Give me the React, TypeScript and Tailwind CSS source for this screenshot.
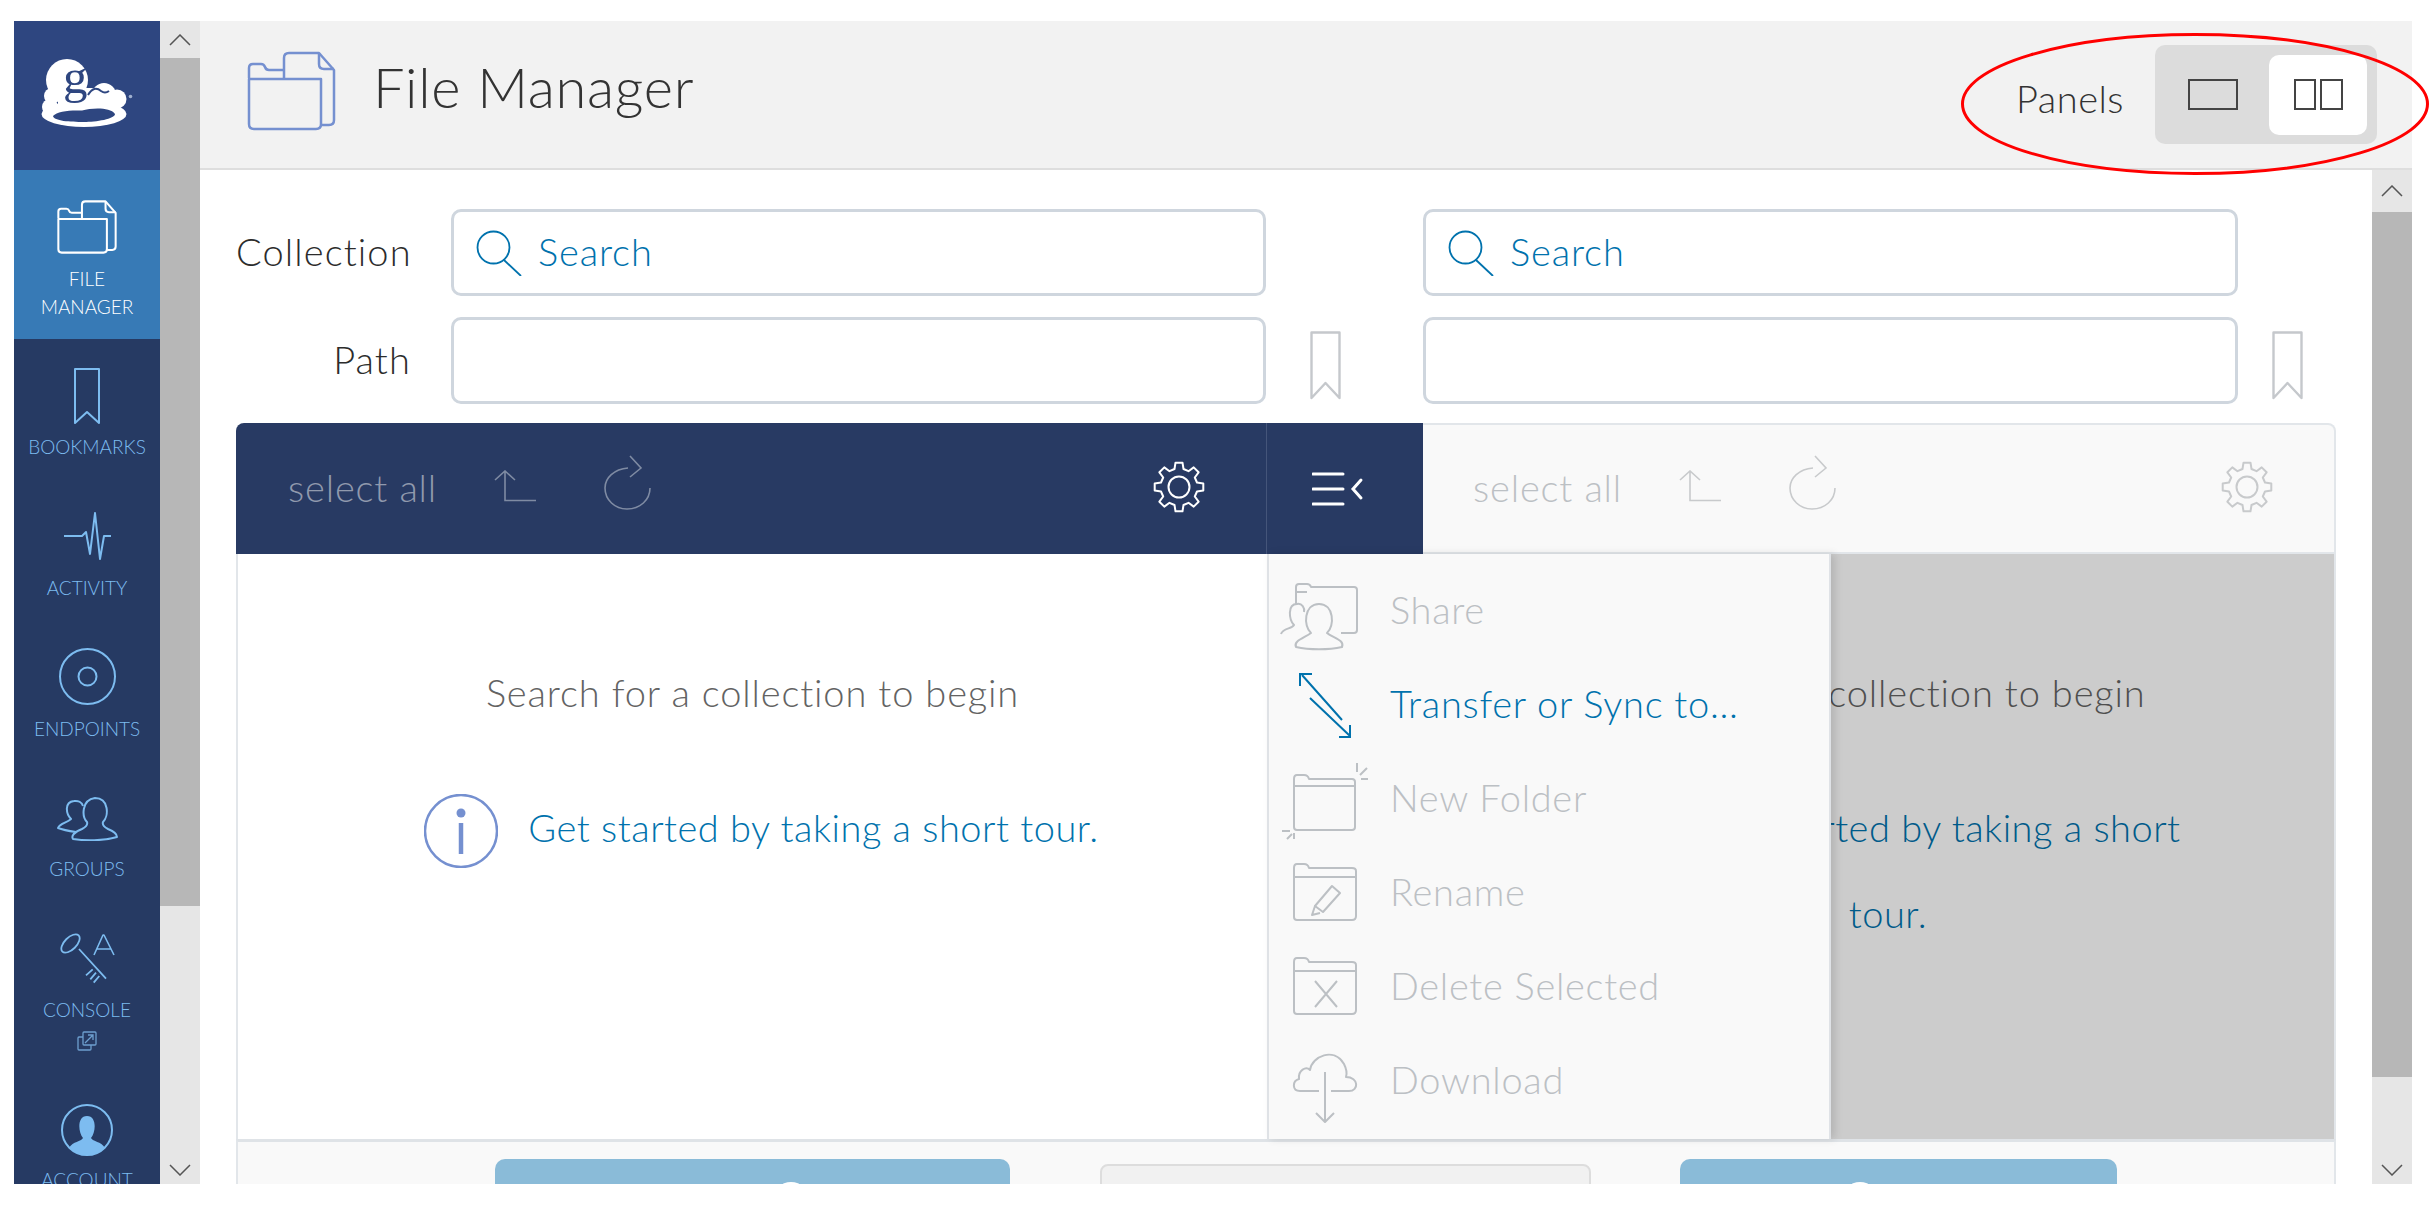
import React from "react";

const gearPath = (() => {
  const cx = 26, cy = 26, teeth = 8, ro = 24.5, ri = 18.5;
  const pts: string[] = [];
  for (let i = 0; i < teeth; i++) {
    const a = (i / teeth) * Math.PI * 2 - Math.PI / 2;
    const w = Math.PI / teeth;
    const p = (r: number, t: number) => `${(cx + Math.cos(t) * r).toFixed(1)} ${(cy + Math.sin(t) * r).toFixed(1)}`;
    pts.push(`${i === 0 ? "M" : "L"}${p(ri, a - w * 0.62)}`);
    pts.push(`L${p(ro, a - w * 0.36)}`);
    pts.push(`L${p(ro, a + w * 0.36)}`);
    pts.push(`L${p(ri, a + w * 0.62)}`);
  }
  return pts.join(" ") + " Z";
})();

function Gear({ color }: { color: string }) {
  return (
    <svg width="52" height="52" viewBox="0 0 52 52" fill="none" stroke={color} strokeWidth="2" strokeLinejoin="round">
      <path d={gearPath} />
      <circle cx="26" cy="26" r="10.5" />
    </svg>
  );
}

function UpIcon({ color }: { color: string }) {
  return (
    <svg width="42" height="32" viewBox="0 0 42 32" fill="none" stroke={color} strokeWidth="1.6">
      <path d="M1 10 L11 1 L21 10 M11 1 V30.5 H42" />
    </svg>
  );
}

function RefreshIcon({ color }: { color: string }) {
  return (
    <svg width="48" height="55" viewBox="0 0 48 55" fill="none" stroke={color} strokeWidth="1.6">
      <path d="M24 13 C 10 14 1 23 1 33 C 1 45 11 54 23 54 C 36 54 46 45 46 33" />
      <path d="M26 1 L37 13 L26 22" />
    </svg>
  );
}

function FilesIcon({ color, sw = 2.5 }: { color: string; sw?: number }) {
  return (
    <svg width="100%" height="100%" viewBox="0 0 89 80" fill="none" stroke={color} strokeWidth={sw} strokeLinejoin="round">
      <path d="M2 27 V17 Q2 13 6 13 H14 Q17 13 18 16 Q19 19 22 19 H36" />
      <path d="M2 28 H74 V73 Q74 78 69 78 H7 Q2 78 2 73 Z" />
      <path d="M37 28 V7 Q37 2 42 2 H72 L87 19 V69 Q87 74 82 74 H74" />
      <path d="M72 2 V13 Q72 18 77 18 H87" />
    </svg>
  );
}

function BookmarkIcon({ color, w, h, sw }: { color: string; w: number; h: number; sw: number }) {
  return (
    <svg width={w} height={h} viewBox="0 0 31 69" fill="none" stroke={color} strokeWidth={sw} strokeLinejoin="round">
      <path d="M1.5 1.5 H29.5 V67 L15.5 52 L1.5 67 Z" />
    </svg>
  );
}

function SearchIcon() {
  return (
    <svg width="46" height="46" viewBox="0 0 46 46" fill="none" stroke="#0072ad" strokeWidth="1.8">
      <circle cx="17.5" cy="17.5" r="16" />
      <path d="M28 30 L45 46" />
    </svg>
  );
}

function InfoIcon() {
  return (
    <svg width="74" height="74" viewBox="0 0 74 74" fill="none" className="inline-block align-middle mr-[30px] -mt-[4px]">
      <circle cx="37" cy="37" r="36" stroke="#7590d0" strokeWidth="2.5" />
      <circle cx="37" cy="19" r="4.5" fill="#7590d0" />
      <path d="M37 29 V60" stroke="#7590d0" strokeWidth="4.5" />
    </svg>
  );
}

function GlobusLogo() {
  return (
    <svg width="115" height="85" viewBox="0 0 115 85">
      <g fill="#fff">
        <circle cx="37" cy="30" r="21" />
        <circle cx="22" cy="46" r="8" />
        <circle cx="20" cy="57" r="8" />
        <circle cx="74" cy="45" r="12" />
        <circle cx="87" cy="49" r="9.500" />
        <ellipse cx="54" cy="64" rx="42.500" ry="13" />
        <rect x="28" y="38" width="55" height="20" />
      </g>
      <path d="M23 66 C27 61 40 60 52 60.500 C62 58 80 57 85 64 C85 69 66 72 54 72 C40 72 24 71 23 66 Z" fill="#2e4680" />
      <path d="M58 45 Q64 35 71 41 Q75 44 79 41" fill="none" stroke="#2e4680" strokeWidth="2" />
      <text x="33" y="43" fontFamily="'Liberation Serif', serif" fontWeight="400" fontSize="49" letterSpacing="0" fill="#2e4680">g</text>
      <circle cx="100.500" cy="46.500" r="1.800" fill="#9fb0cf" />
    </svg>
  );
}

const navColor = "#7dbcf0";

const navItems = [
  {
    label: "BOOKMARKS",
    cls: "h-[141px] pt-[29px]",
    gap: "mt-[11px]",
    icon: (
      <svg width="26" height="56" viewBox="0 0 26 56" fill="none" stroke={navColor} strokeWidth="2" strokeLinejoin="round">
        <path d="M1 1 H25 V55 L13 44 L1 55 Z" />
      </svg>
    ),
  },
  {
    label: "ACTIVITY",
    cls: "h-[141px] pt-[32px]",
    gap: "mt-[16px]",
    icon: (
      <svg width="47" height="48" viewBox="0 0 47 48" fill="none" stroke={navColor} strokeWidth="2" strokeLinejoin="round">
        <path d="M0 24 H18 L22 20 L26 42 L31 1 L36 47 L40 24 H47" />
      </svg>
    ),
  },
  {
    label: "ENDPOINTS",
    cls: "h-[141px] pt-[27px]",
    gap: "mt-[12px]",
    icon: (
      <svg width="57" height="57" viewBox="0 0 57 57" fill="none" stroke={navColor} strokeWidth="2">
        <circle cx="28.500" cy="28.500" r="27.500" />
        <circle cx="28.500" cy="28.500" r="9" />
      </svg>
    ),
  },
  {
    label: "GROUPS",
    cls: "h-[141px] pt-[34px]",
    gap: "mt-[16px]",
    icon: (
      <svg width="61" height="45" viewBox="0 0 61 45" fill="none" stroke={navColor} strokeWidth="2" strokeLinejoin="round">
        <path d="M19 36 C12 35 6 34 1 32 C3 27 10 27 14 23 C9 18 7 6 17 5 C21 4.500 25 6 26 10" />
        <path d="M16 43 C14 40 17 36 25 33 C29 31 31 29 30 26 C25 21 24 4 38 2 C52 2 52 20 46 26 C45 29 47 31 51 33 C56 35 60 38 60 41 C46 45 28 45 16 43 Z" />
      </svg>
    ),
  },
  {
    label: "CONSOLE",
    cls: "h-[197px] pt-[30px]",
    gap: "mt-[13px]",
    icon: (
      <svg width="55" height="52" viewBox="0 0 55 52" fill="none" stroke={navColor} strokeWidth="1.8" strokeLinejoin="round">
        <ellipse cx="10.500" cy="10.500" rx="6" ry="11.500" transform="rotate(45 10.500 10.500)" />
        <path d="M19 16 L46 45.700 M32.700 36.300 L26 42.300 M36 39.700 L30.300 46.300 M39.300 43 L33.700 49.700" />
        <path d="M34 22 L43 2 H44 L54 22 M37 16 H51" strokeWidth="1.6" />
      </svg>
    ),
    extra: (
      <svg width="20" height="20" viewBox="0 0 20 20" fill="none" stroke="#6d9fcf" strokeWidth="1.3" className="mt-[9px]">
        <rect x="6" y="1" width="13" height="13" rx="1" />
        <path d="M6 6 H2 Q1 6 1 7 V18 Q1 19 2 19 H13 Q14 19 14 18 V14" />
        <path d="M8 12 L16 4 M11 4 H16 V9" />
      </svg>
    ),
  },
  {
    label: "ACCOUNT",
    cls: "h-[140px] pt-[4px]",
    gap: "mt-[12px]",
    icon: (
      <svg width="52" height="52" viewBox="0 0 52 52" fill="none">
        <circle cx="26" cy="26" r="25" stroke={navColor} strokeWidth="2" />
        <path d="M8 44 C12 37 20 38 22 34 C17 28 16 12 26 12 C36 12 35 28 30 34 C32 38 40 37 44 44 C34 53 18 53 8 44 Z" fill={navColor} />
      </svg>
    ),
  },
];

function Sidebar() {
  return (
    <nav className="w-[146px] h-full shrink-0 bg-[#263a63] overflow-hidden tracking-normal">
      <div className="h-[149px] bg-[#2e4680] flex justify-center pt-[29px]">
        <GlobusLogo />
      </div>
      <div className="h-[169px] bg-[#377ab6] flex flex-col items-center pt-[30px] text-white">
        <div className="w-[60px] h-[54px]"><FilesIcon color="#ffffff" sw={3} /></div>
        <span className="mt-[11px] text-[19px] leading-[28px] text-center">FILE<br />MANAGER</span>
      </div>
      {navItems.map((item) => (
        <div key={item.label} className={`flex flex-col items-center shrink-0 ${item.cls}`}>
          {item.icon}
          <span className={`text-[19px] leading-[24px] text-[#7dbcf0] ${item.gap}`}>{item.label}</span>
          {item.extra}
        </div>
      ))}
    </nav>
  );
}

function Scrollbar({ up, thumb }: { up: string; thumb: string }) {
  return (
    <div className="w-[40px] h-full shrink-0 flex flex-col bg-[#e6e6e6]">
      <div className={`${up} flex items-center justify-center`}>
        <svg width="22" height="12" viewBox="0 0 22 12" fill="none" stroke="#555" strokeWidth="1.5"><path d="M1 11 L11 1 L21 11" /></svg>
      </div>
      <div className={`${thumb} bg-[#b7b7b7]`} />
      <div className="flex-1 flex items-end justify-center pb-[8px]">
        <svg width="22" height="12" viewBox="0 0 22 12" fill="none" stroke="#555" strokeWidth="1.5"><path d="M1 1 L11 11 L21 1" /></svg>
      </div>
    </div>
  );
}

function FormField({ search }: { search?: boolean }) {
  return (
    <div className="w-[815px] h-[87px] shrink-0 border-[3px] border-[#cfd6de] rounded-[10px] bg-white flex items-center pl-[22px] gap-[16px]">
      {search && <SearchIcon />}
      {search && <span className="text-[#0072ad] text-[38px] -mt-[2px]">Search</span>}
    </div>
  );
}

function FormRow({ label, search }: { label: string; search?: boolean }) {
  return (
    <div className="flex items-center ml-[36px]">
      <div className="w-[175px] mr-[40px] text-right text-[38px] tracking-[1.1px] text-[#2c2c2c] -mt-[2px]">{label}</div>
      <FormField search={search} />
      <div className="w-[157px] shrink-0 pl-[44px] pt-[14px] h-[87px]">
        {!search && <BookmarkIcon color="#c5c8cc" w={31} h={69} sw={2.4} />}
      </div>
      <FormField search={search} />
      <div className="pl-[34px] pt-[14px] h-[87px]">
        {!search && <BookmarkIcon color="#c5c8cc" w={31} h={69} sw={2.4} />}
      </div>
    </div>
  );
}

function Toolbar({ text, stroke, gear, cls }: { text: string; stroke: string; gear: string; cls: string }) {
  return (
    <div className={`flex items-center h-full ${cls}`}>
      <span className="text-[38px] w-[147px] whitespace-nowrap -mt-[2px]" style={{ color: text }}>select all</span>
      <div className="ml-[59px] mt-[-6px]"><UpIcon color={stroke} /></div>
      <div className="ml-[68px] mt-[-12px]"><RefreshIcon color={stroke} /></div>
      <div className="ml-auto mt-[-4px]"><Gear color={gear} /></div>
    </div>
  );
}

function EmptyPane({ cls }: { cls: string }) {
  return (
    <div className={`pt-[108px] text-center ${cls}`}>
      <p className="text-[#636363] text-[38px] leading-[60px] whitespace-nowrap">Search for a collection to begin</p>
      <p className="mt-[62px] pl-[18px] text-[#0072ad] text-[38px] leading-[86px] tracking-[0.5px]">
        <InfoIcon />
        Get started by taking a short tour.
      </p>
    </div>
  );
}

const menuColor = "#bcc0c4";

const menuRows = [
  {
    label: "Share",
    active: false,
    icon: (
      <g fill="none" stroke={menuColor} strokeWidth="2" strokeLinejoin="round">
        <path d="M17 38 V21 Q17 18 20 18 H28 Q31 18 32 21 H75 Q78 21 78 24 V64 Q78 67 75 67 H62" />
        <path d="M17 26 H28" />
        <path d="M2 68 C4 62 13 63 15 59 C10 54 8 38 18 38 C23 37 26 42 25 46" />
        <path d="M17 81 C14 75 25 72 32 67 C24 60 25 38 40 38 C55 38 56 60 48 67 C54 72 66 74 63 81 C50 84 30 84 17 81 Z" />
      </g>
    ),
  },
  {
    label: "Transfer or Sync to...",
    active: true,
    icon: (
      <g fill="none" stroke="#0072ad" strokeWidth="2">
        <path d="M23 15 L63 60 M21 26 V14 H33" />
        <path d="M31 38 L71 76 M71 65 V77 H60" />
      </g>
    ),
  },
  {
    label: "New Folder",
    active: false,
    icon: (
      <g fill="none" stroke={menuColor} strokeWidth="2" strokeLinejoin="round">
        <path d="M15 70 V25 Q15 21 18 21 H25 Q29 21 30 25 H73 Q76 25 76 28 V73 Q76 76 73 76 H18 Q15 76 15 73 Z" />
        <path d="M15 32 H76" />
        <path d="M78 9 V18 M88 14 L81 21 M82 25 H89" />
        <path d="M3 77 H11 M15 85 V79 M8 85 L13 80" />
      </g>
    ),
  },
  {
    label: "Rename",
    active: false,
    icon: (
      <g fill="none" stroke={menuColor} strokeWidth="2" strokeLinejoin="round">
        <path d="M15 67 V20 Q15 16 18 16 H25 Q29 16 30 20 H73 Q77 20 77 23 V68 Q77 72 73 72 H18 Q15 72 15 69 Z" />
        <path d="M15 29 H77" />
        <path d="M36 58 L53 38 L61 45 L44 64 Z M36 58 L33 67 L41 65" />
      </g>
    ),
  },
  {
    label: "Delete Selected",
    active: false,
    icon: (
      <g fill="none" stroke={menuColor} strokeWidth="2" strokeLinejoin="round">
        <path d="M15 67 V20 Q15 16 18 16 H25 Q29 16 30 20 H73 Q77 20 77 23 V68 Q77 72 73 72 H18 Q15 72 15 69 Z" />
        <path d="M15 29 H77" />
        <path d="M36 39 L58 65 M58 39 L36 65" />
      </g>
    ),
  },
  {
    label: "Download",
    active: false,
    icon: (
      <g fill="none" stroke={menuColor} strokeWidth="2" strokeLinejoin="round">
        <path d="M40 55 H21 C13 55 13 45 20 43 C19 34 27 30 31 34 C33 20 55 11 65 28 C68 34 68 38 67 41 C80 41 80 55 70 55 H52" />
        <path d="M46 36 V86 M37 77 L46 86 L55 77" />
      </g>
    ),
  },
];

function TransferMenu() {
  return (
    <div className="absolute left-[1029px] top-0 bottom-0 w-[564px] bg-[#f9f9f9] border-l-2 border-r-2 border-[#dfe2e6] shadow-[4px_0_8px_rgba(0,0,0,0.12)] pt-[12px] pl-[10px]">
      {menuRows.map((row) => (
        <div key={row.label} className="h-[94px] flex items-center">
          <svg width="90" height="94" viewBox="0 0 90 94" className="shrink-0">{row.icon}</svg>
          <span className={`ml-[21px] -mt-[7px] text-[38px] tracking-[0.7px] ${row.active ? "text-[#0072ad]" : "text-[#bcc0c4]"}`}>{row.label}</span>
        </div>
      ))}
    </div>
  );
}

function Panels() {
  return (
    <div className="w-[2100px] h-[762px] ml-[36px] mt-[19px] flex flex-col">
      <div className="h-[131px] flex shrink-0">
        <div className="w-[1030px] shrink-0 bg-[#283a63] rounded-tl-[8px]">
          <Toolbar text="#9099ad" stroke="#7f8ba3" gear="#ffffff" cls="pl-[52px] pr-[61px]" />
        </div>
        <div className="w-[157px] shrink-0 bg-[#283a63] border-l border-[#45557a] pl-[45px] flex items-center">
          <svg width="52" height="36" viewBox="0 0 52 36" fill="none" stroke="#fff" strokeWidth="3" strokeLinecap="round">
            <path d="M1 3 H31 M1 18 H31 M1 33 H31" />
            <path d="M49 9 L41 18 L49 27" />
          </svg>
        </div>
        <div className="flex-1 bg-[#f9f9f9] border-t-2 border-r-2 border-b-2 border-[#e2e6ea] rounded-tr-[8px]">
          <Toolbar text="#bcc0c4" stroke="#c8cacc" gear="#c8cacc" cls="pl-[50px] pr-[61px]" />
        </div>
      </div>
      <div className="h-[585px] shrink-0 flex relative border-l-2 border-r-2 border-[#e2e6ea]">
        <EmptyPane cls="w-[1029px] shrink-0" />
        <div className="flex-1 relative pl-[157px]">
          <EmptyPane cls="px-[130px]" />
          <div className="absolute inset-0 bg-black/20" />
        </div>
        <TransferMenu />
      </div>
      <div className="flex-1 bg-[#f9f9f9] border-t-[3px] border-[#dfe3e7] border-x-2 border-x-[#e2e6ea] flex">
        <div className="w-[515px] h-[80px] ml-[257px] mt-[17px] bg-[#8abbd8] rounded-t-[10px] flex justify-center shrink-0 pl-[76px]">
          <div className="w-[36px] h-[36px] rounded-full bg-white mt-[23px]" />
        </div>
        <div className="w-[491px] h-[80px] ml-[90px] mt-[22px] bg-[#f1f1f1] border-2 border-[#dddddd] rounded-t-[8px] shrink-0" />
        <div className="w-[437px] h-[80px] ml-[89px] mt-[17px] bg-[#8abbd8] rounded-t-[10px] flex justify-center shrink-0 pr-[78px]">
          <div className="w-[36px] h-[36px] rounded-full bg-white mt-[23px]" />
        </div>
      </div>
    </div>
  );
}

export default function App() {
  return (
    <div className="relative w-[2431px] h-[1211px] overflow-hidden bg-white font-['Lato','Open_Sans',sans-serif] font-light tracking-[0.85px]">
      <div className="w-[2398px] h-[1163px] ml-[14px] pt-0 translate-y-[21px] flex">
        <Sidebar />
        <Scrollbar up="h-[37px]" thumb="h-[848px]" />
        <main className="flex-1 min-w-0 flex flex-col">
          <header className="h-[149px] shrink-0 bg-[#f2f2f2] border-b-2 border-[#dedede] flex items-center">
            <div className="w-[89px] h-[80px] ml-[47px] -mt-[8px]"><FilesIcon color="#7590d0" /></div>
            <h1 className="ml-[37px] text-[56px] tracking-[0.7px] text-[#333] -mt-[16px]">File Manager</h1>
            <div className="ml-auto flex items-center mr-[35px]">
              <span className="text-[38px] tracking-[0.5px] text-[#333] mr-[31px] mt-[8px]">Panels</span>
              <div className="w-[222px] h-[99px] bg-[#dcdcdc] rounded-[10px] flex items-center pl-[33px]">
                <div className="w-[50px] h-[31px] border-2 border-[#444]" />
                <div className="ml-[31px] w-[98px] h-[80px] bg-white rounded-[10px] flex items-center justify-center gap-[4px]">
                  <div className="w-[22px] h-[31px] border-2 border-[#444]" />
                  <div className="w-[23px] h-[31px] border-2 border-[#444]" />
                </div>
              </div>
            </div>
          </header>
          <div className="flex-1 min-h-0 flex">
            <div className="flex-1 min-w-0 overflow-hidden pt-[39px]">
              <div className="flex flex-col gap-[21px]">
                <FormRow label="Collection" search />
                <FormRow label="Path" />
              </div>
              <Panels />
            </div>
            <Scrollbar up="h-[42px]" thumb="h-[865px]" />
          </div>
        </main>
      </div>
      <svg width="470" height="144" viewBox="0 0 470 144" fill="none" className="absolute left-[1960px] top-[32px]">
        <ellipse cx="235" cy="72" rx="232.500" ry="69.500" stroke="#ff0000" strokeWidth="3" />
      </svg>
    </div>
  );
}
